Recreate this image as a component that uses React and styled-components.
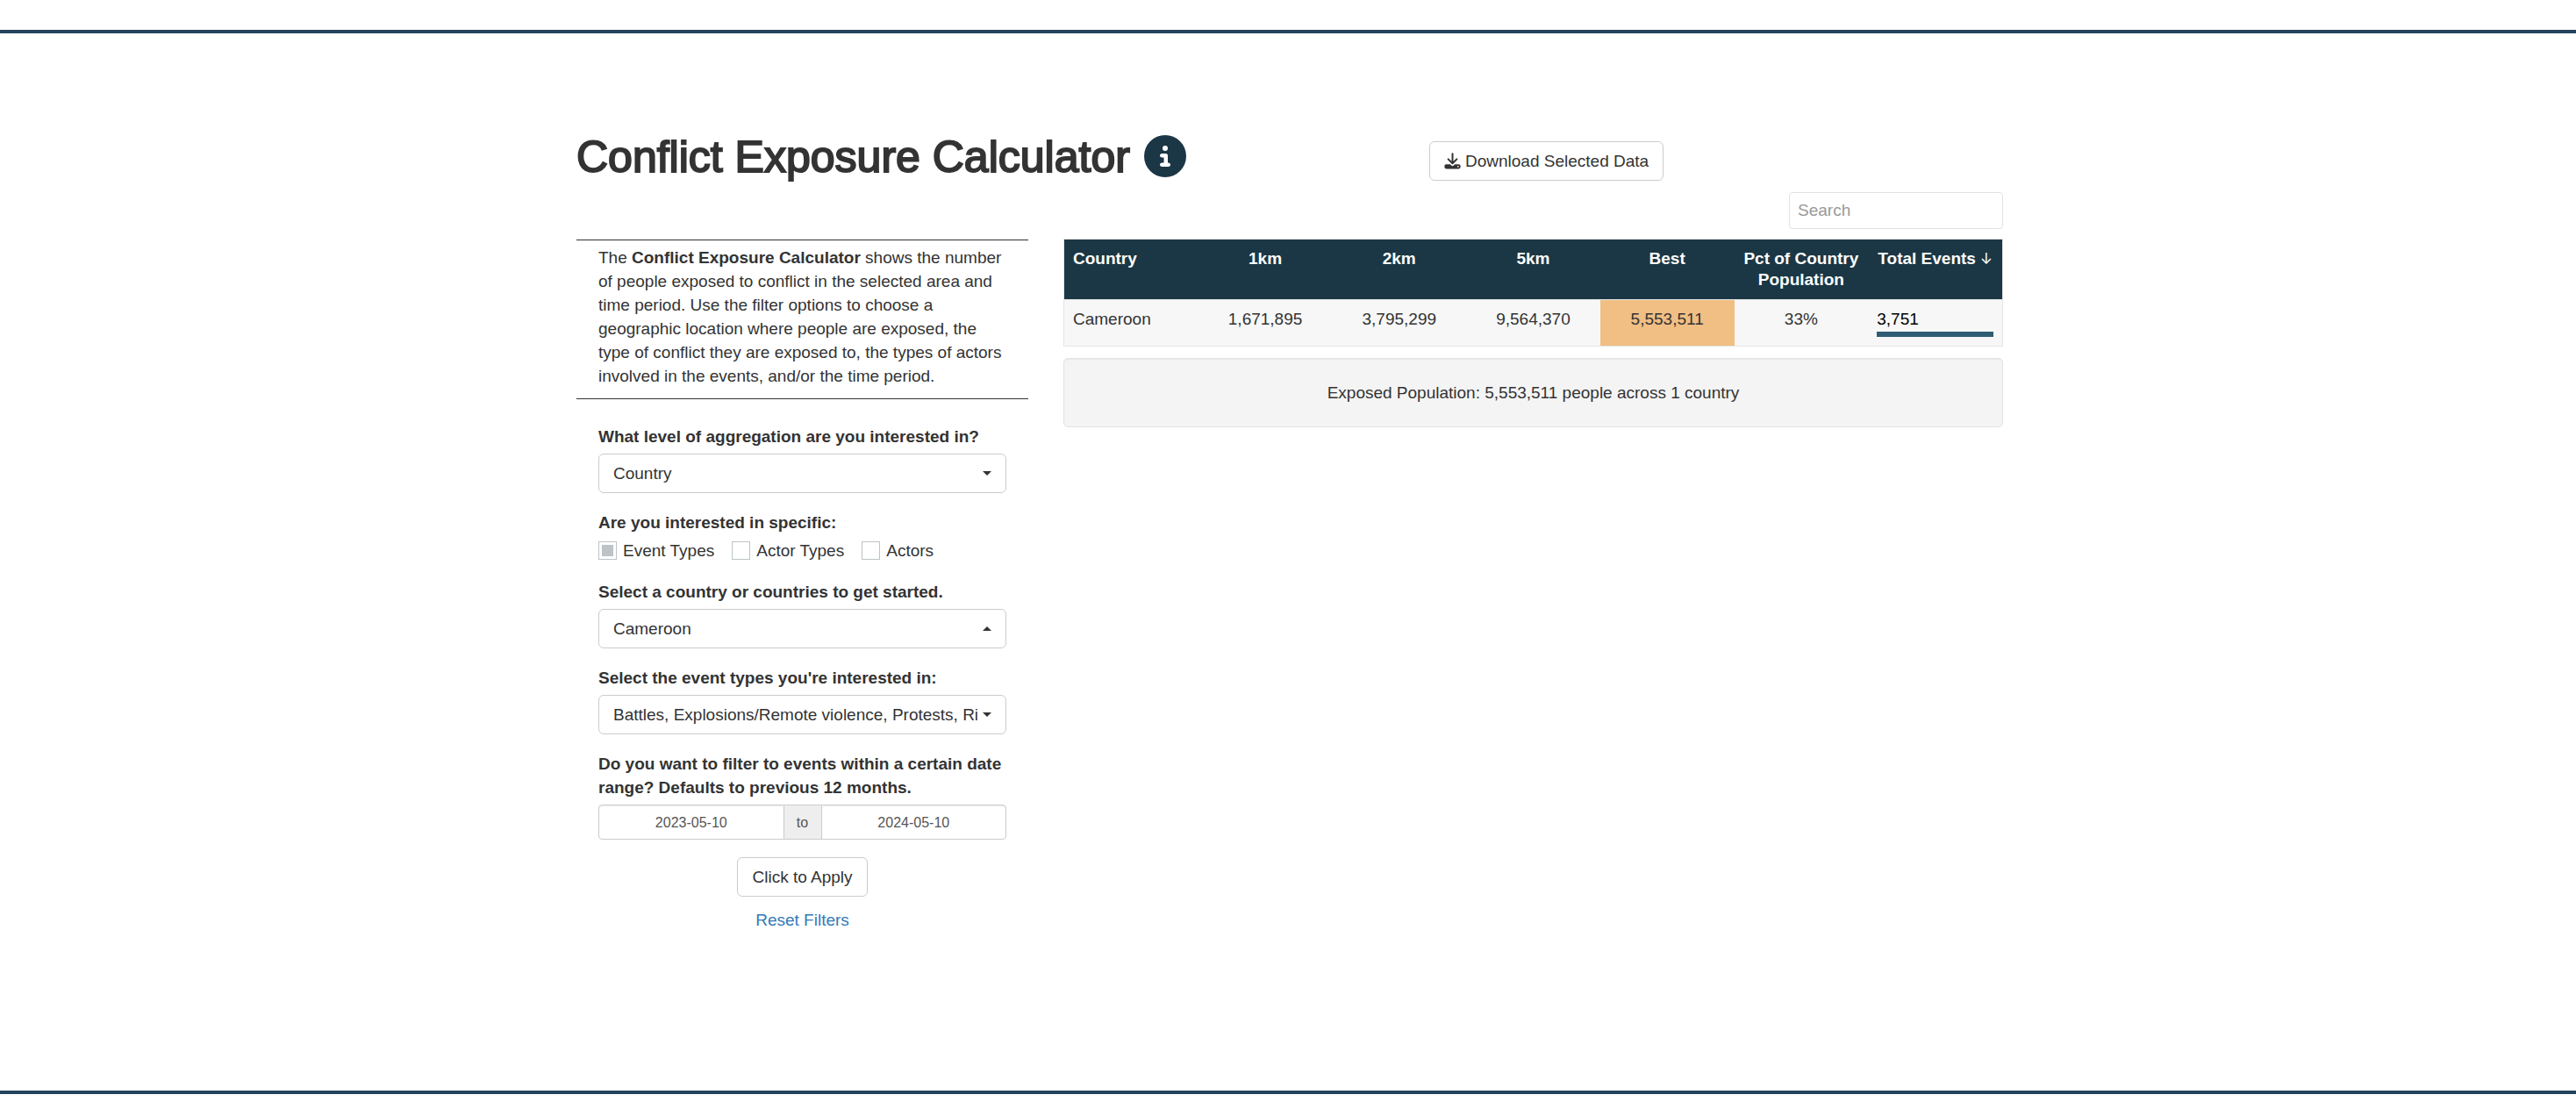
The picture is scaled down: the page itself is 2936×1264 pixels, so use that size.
import React, { useState } from "react";
import styled, { createGlobalStyle } from "styled-components";
import { FaCircleInfo } from "react-icons/fa6";

const GlobalStyle = createGlobalStyle`
  * { box-sizing: border-box; }
  body {
    margin: 0;
    background: #fff;
    color: #333;
    font: 19px/27px "Liberation Sans", Arial, sans-serif;
  }
  button, input, select { font: inherit; color: inherit; }
`;

const Page = styled.div`
  padding: 34px 0 17px;
`;

const Frame = styled.main`
  border-top: 4px solid #24435c;
  border-bottom: 4px solid #24435c;
  padding: 116px 16px 181px;
`;

const Container = styled.div`
  max-width: 1630px;
  margin: 0 auto;
  padding-left: 4px;
  display: flex;
  flex-direction: column;
  gap: 13px;
`;

const Header = styled.header`
  display: grid;
  grid-template-columns: 972fr 654fr;
  align-items: start;
`;

const TitleRow = styled.div`
  display: flex;
  align-items: flex-start;
  gap: 16px;
  height: 52px;
`;

const Title = styled.h1`
  margin: 0;
  font-size: 50px;
  line-height: 50px;
  font-weight: 400;
  white-space: nowrap;
  -webkit-text-stroke: 2px #333;
`;

const InfoButton = styled.button`
  display: flex;
  padding: 0;
  border: 0;
  background: none;
  color: #1b3745;
  font-size: 48px;
`;

const Button = styled.button`
  display: inline-flex;
  align-items: center;
  gap: 5px;
  height: 45px;
  padding: 0 16px;
  border: 1px solid #ccc;
  border-radius: 6px;
  background: #fff;
`;

const DownloadArea = styled.div`
  padding-top: 7px;
`;

const Columns = styled.div`
  display: grid;
  grid-template-columns: 515fr 1071fr;
  gap: 40px;
  align-items: start;
`;

const Sidebar = styled.aside`
  padding-top: 54px;
`;

const Intro = styled.p`
  margin: 0;
  padding: 6px 18px 12px 25px;
  border-top: 1px solid #333;
  border-bottom: 1px solid #333;
`;

const Filters = styled.form`
  display: flex;
  flex-direction: column;
  gap: 20px;
  padding: 29px 25px 0;
`;

const Field = styled.div`
  display: flex;
  flex-direction: column;
  gap: 6px;
`;

const Label = styled.label`
  font-weight: 700;
`;

const Group = styled.fieldset`
  margin: 0;
  padding: 0;
  border: 0;
  min-width: 0;
`;

const Legend = styled.legend`
  padding: 0;
  margin-bottom: 5px;
  font-weight: 700;
`;

const Checks = styled.div`
  display: flex;
  gap: 20px;
`;

const CheckLabel = styled.label`
  display: flex;
  align-items: center;
  gap: 7px;
  white-space: nowrap;
`;

const CheckBox = styled.input`
  appearance: none;
  width: 21px;
  height: 21px;
  margin: 0;
  padding: 3px;
  border: 1px solid #bdc3c7;
  background: #fff content-box;
  &:checked { background-color: #bdc3c7; }
`;

const SelectBox = styled.div`
  position: relative;
`;

const SelectInput = styled.select`
  display: block;
  appearance: none;
  width: 100%;
  height: 45px;
  padding: 0 32px 0 16px;
  border: 1px solid #ccc;
  border-radius: 6px;
  background: #fff;
`;

const Caret = styled.span`
  position: absolute;
  top: 20px;
  right: 17px;
  border: 5px solid transparent;
  border-${(p) => (p.$up ? "bottom" : "top")}-color: #333;
  border-${(p) => (p.$up ? "top" : "bottom")}-width: 0;
  pointer-events: none;
`;

const DateRange = styled.div`
  display: grid;
  grid-template-columns: 1fr 44px 1fr;
  height: 40px;
  border: 1px solid #ccc;
  border-radius: 4px;
  font-size: 16px;
  color: #555;
`;

const DateInput = styled.input`
  min-width: 0;
  border: 0;
  border-radius: 4px;
  background: none;
  text-align: center;
  box-shadow: inset 0 1px 1px rgba(0, 0, 0, 0.08);
`;

const DateJoin = styled.span`
  display: flex;
  align-items: center;
  justify-content: center;
  border: solid #ccc;
  border-width: 0 1px;
  background: #eee;
`;

const Actions = styled.div`
  display: flex;
  flex-direction: column;
  align-items: center;
  gap: 13px;
`;

const ResetLink = styled.a`
  color: #337ab7;
  text-decoration: none;
`;

const Results = styled.section`
  display: flex;
  flex-direction: column;
  min-width: 0;
`;

const Search = styled.input`
  align-self: flex-end;
  width: 244px;
  height: 42px;
  margin-bottom: 11px;
  padding: 0 9px;
  border: 1px solid #e2e2e2;
  border-radius: 4px;
  background: #fff;
  &::placeholder { color: #999; opacity: 1; }
`;

const Table = styled.table`
  width: 100%;
  table-layout: fixed;
  border-spacing: 0;
  border: 1px solid #e5e5e5;
  line-height: 24px;
`;

const HeadCell = styled.th`
  padding: 10px;
  background: #1b3745;
  color: #fff;
  vertical-align: top;
  text-align: ${(p) => p.$align || "center"};
`;

const SortArrow = styled.span`
  font-family: Inter, sans-serif;
  font-size: 17px;
  line-height: 20px;
  font-weight: 400;
`;

const Cell = styled.td`
  padding: 10px;
  border-top: 1px solid #e5e5e5;
  background: ${(p) => (p.$highlight ? "#f1be84" : "#f7f7f7")};
  color: ${(p) => (p.$dark ? "#000" : "inherit")};
  vertical-align: top;
  text-align: ${(p) => p.$align || "center"};
`;

const Bar = styled.div`
  height: 6px;
  margin-top: 2px;
  background: #2e5c73;
`;

const Summary = styled.p`
  margin: 13px 0 0;
  padding: 25px;
  border: 1px solid #e3e3e3;
  border-radius: 5px;
  background: #f4f4f4;
  box-shadow: inset 0 1px 1px rgba(0, 0, 0, 0.05);
  text-align: center;
`;

const columns = ["Country", "1km", "2km", "5km", "Best", "Pct of Country Population", "Total Events"];
const sortedColumn = "Total Events";
const rows = [
  { country: "Cameroon", km1: "1,671,895", km2: "3,795,299", km5: "9,564,370", best: "5,553,511", pct: "33%", events: "3,751", share: 100 },
];

function DownloadIcon() {
  return (
    <svg width="19" height="19" viewBox="0 0 19 19" fill="none" aria-hidden="true">
      <path d="M9.5 1.2v10.6M4.6 7.4l4.9 4.9 4.9-4.9" stroke="#333" strokeWidth="2" strokeLinecap="round" strokeLinejoin="round" />
      <path
        fill="#333"
        fillRule="evenodd"
        d="M2.6 13.2h4.1l1.4 1.3a2 2 0 0 0 2.8 0l1.4-1.3h4.1a2.3 2.3 0 0 1 2.3 2.3v.6a2.3 2.3 0 0 1-2.3 2.3H2.6a2.3 2.3 0 0 1-2.3-2.3v-.6a2.3 2.3 0 0 1 2.3-2.3zm13.2 1.7a.9.9 0 1 0 0 1.8.9.9 0 0 0 0-1.8z"
      />
    </svg>
  );
}

function SelectField({ id, label, value, up }) {
  return (
    <Field>
      <Label htmlFor={id}>{label}</Label>
      <SelectBox>
        <SelectInput id={id} defaultValue={value}>
          <option>{value}</option>
        </SelectInput>
        <Caret $up={up} />
      </SelectBox>
    </Field>
  );
}

export default function App() {
  const [checked, setChecked] = useState({ "Event Types": true, "Actor Types": false, Actors: false });
  return (
    <Page>
      <GlobalStyle />
      <Frame>
        <Container>
          <Header>
            <TitleRow>
              <Title>Conflict Exposure Calculator</Title>
              <InfoButton type="button" aria-label="About">
                <FaCircleInfo />
              </InfoButton>
            </TitleRow>
            <DownloadArea>
              <Button type="button">
                <DownloadIcon />
                Download Selected Data
              </Button>
            </DownloadArea>
          </Header>
          <Columns>
            <Sidebar>
              <Intro>
                The <b>Conflict Exposure Calculator</b> shows the number of people exposed to conflict in the
                selected area and time period. Use the filter options to choose a geographic location where
                people are exposed, the type of conflict they are exposed to, the types of actors involved in
                the events, and/or the time period.
              </Intro>
              <Filters>
                <SelectField id="level" label="What level of aggregation are you interested in?" value="Country" />
                <Group>
                  <Legend>Are you interested in specific:</Legend>
                  <Checks>
                    {Object.keys(checked).map((name) => (
                      <CheckLabel key={name}>
                        <CheckBox
                          type="checkbox"
                          checked={checked[name]}
                          onChange={() => setChecked({ ...checked, [name]: !checked[name] })}
                        />
                        {name}
                      </CheckLabel>
                    ))}
                  </Checks>
                </Group>
                <SelectField id="country" label="Select a country or countries to get started." value="Cameroon" up />
                <SelectField
                  id="events"
                  label="Select the event types you're interested in:"
                  value="Battles, Explosions/Remote violence, Protests, Riots"
                />
                <Field>
                  <Label htmlFor="from">
                    Do you want to filter to events within a certain date range? Defaults to previous 12 months.
                  </Label>
                  <DateRange>
                    <DateInput id="from" defaultValue="2023-05-10" />
                    <DateJoin>to</DateJoin>
                    <DateInput aria-label="End date" defaultValue="2024-05-10" />
                  </DateRange>
                </Field>
                <Actions>
                  <Button type="button">Click to Apply</Button>
                  <ResetLink href="#">Reset Filters</ResetLink>
                </Actions>
              </Filters>
            </Sidebar>
            <Results>
              <Search type="text" placeholder="Search" aria-label="Search" />
              <Table>
                <thead>
                  <tr>
                    {columns.map((name, i) => (
                      <HeadCell key={name} scope="col" $align={i === 0 ? "left" : "center"}>
                        {name}
                        {name === sortedColumn && <SortArrow>{"\u00a0↓"}</SortArrow>}
                      </HeadCell>
                    ))}
                  </tr>
                </thead>
                <tbody>
                  {rows.map((row) => (
                    <tr key={row.country}>
                      <Cell $align="left">{row.country}</Cell>
                      <Cell>{row.km1}</Cell>
                      <Cell>{row.km2}</Cell>
                      <Cell>{row.km5}</Cell>
                      <Cell $highlight>{row.best}</Cell>
                      <Cell>{row.pct}</Cell>
                      <Cell $align="left" $dark>
                        {row.events}
                        <Bar style={{ width: `${row.share}%` }} />
                      </Cell>
                    </tr>
                  ))}
                </tbody>
              </Table>
              <Summary>Exposed Population: 5,553,511 people across 1 country</Summary>
            </Results>
          </Columns>
        </Container>
      </Frame>
    </Page>
  );
}
